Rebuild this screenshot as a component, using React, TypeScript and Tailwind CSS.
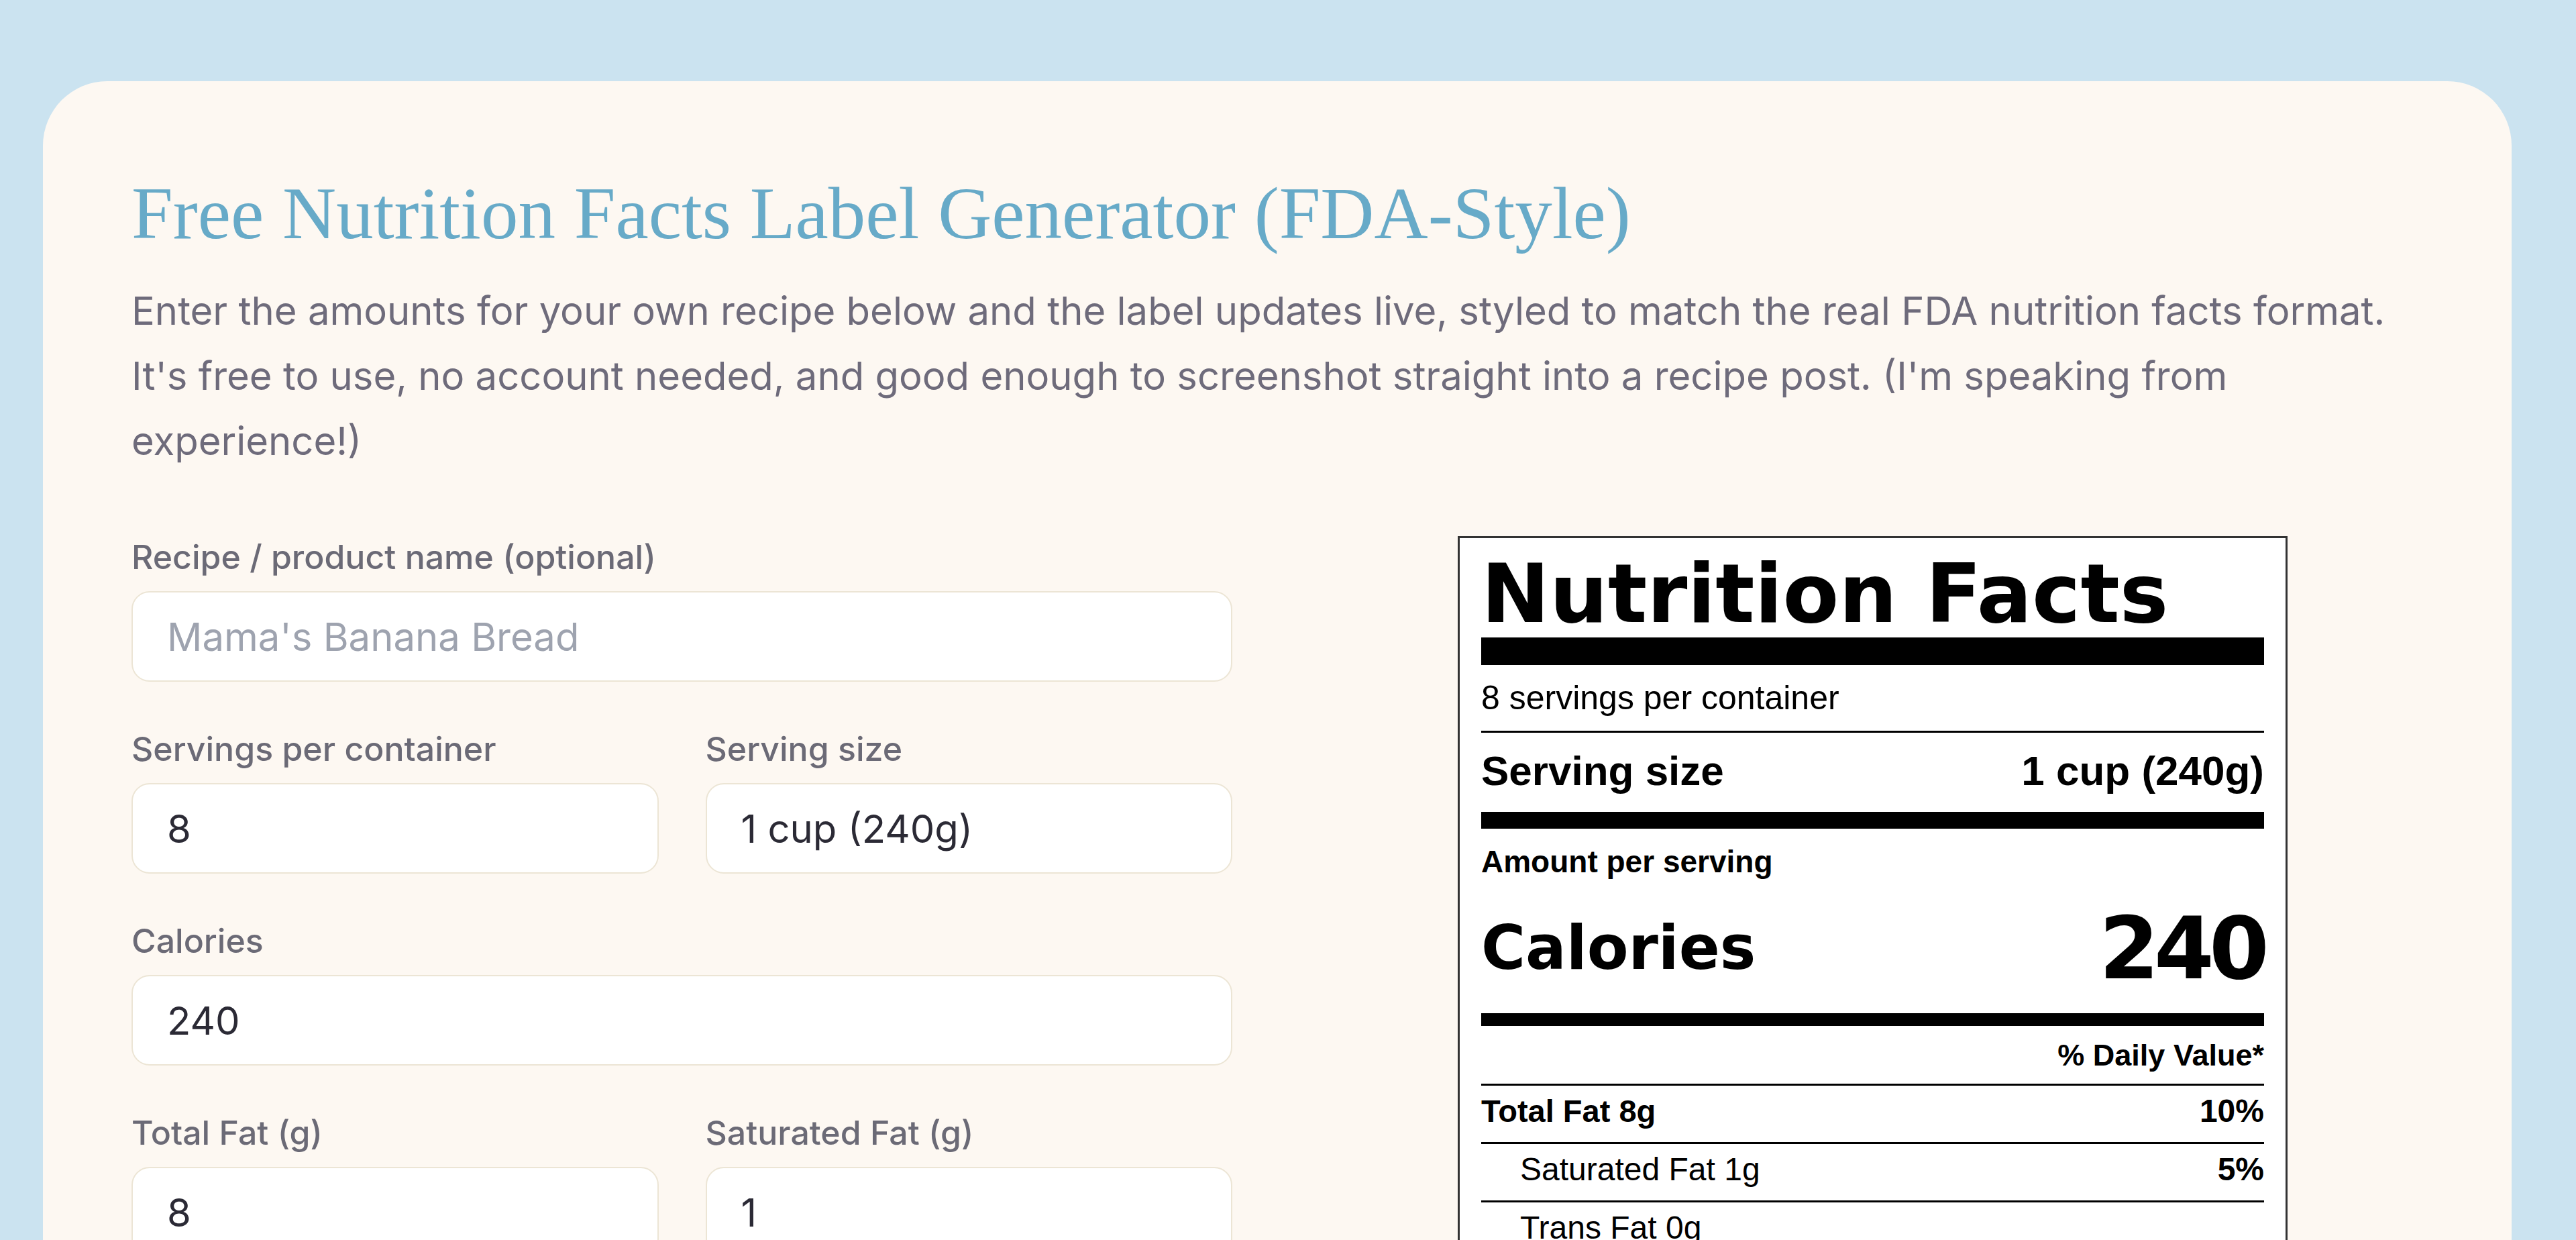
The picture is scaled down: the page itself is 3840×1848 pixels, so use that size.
import React from 'react'

type Field = {
  label: string
  value?: string
  placeholder?: string
  full?: boolean
}

const fields: Field[] = [
  { label: 'Recipe / product name (optional)', placeholder: "Mama's Banana Bread", full: true },
  { label: 'Servings per container', value: '8' },
  { label: 'Serving size', value: '1 cup (240g)' },
  { label: 'Calories', value: '240', full: true },
  { label: 'Total Fat (g)', value: '8' },
  { label: 'Saturated Fat (g)', value: '1' },
  { label: 'Trans Fat (g)', value: '0' },
  { label: 'Cholesterol (mg)', value: '0' },
  { label: 'Sodium (mg)', value: '0' },
  { label: 'Total Carbohydrate (g)', value: '0' },
]

type Nutrient = {
  name: string
  amount: string
  dv?: string
  bold?: boolean
  indent?: boolean
}

const nutrients: Nutrient[] = [
  { name: 'Total Fat', amount: '8g', dv: '10%', bold: true },
  { name: 'Saturated Fat', amount: '1g', dv: '5%', indent: true },
  { name: 'Trans Fat', amount: '0g', indent: true },
  { name: 'Cholesterol', amount: '0mg', dv: '0%', bold: true },
  { name: 'Sodium', amount: '0mg', dv: '0%', bold: true },
  { name: 'Total Carbohydrate', amount: '0g', dv: '0%', bold: true },
]

function FormField({ field }: { field: Field }) {
  return (
    <div className={field.full ? 'col-span-2' : ''}>
      <label className="mb-[19px] block text-[50px] font-medium leading-[63px] text-[#6b6a76]">
        {field.label}
      </label>
      <input
        type="text"
        defaultValue={field.value}
        placeholder={field.placeholder}
        className="h-[135px] w-full rounded-[27px] border-2 border-[#ece5d5] bg-white px-[51px] text-[58px] text-[#2b2a35] outline-none placeholder:text-[#9ea3af]"
      />
    </div>
  )
}

function NutritionLabel() {
  return (
    <div className="mx-auto w-[1237px] border-[3px] border-[#333] bg-white px-[32px] pt-[23px] pb-[30px] font-['Liberation_Sans',Arial,sans-serif] text-black">
      <h2 className="font-['DejaVu_Sans',sans-serif] text-[122px] font-bold leading-[120px]">
        Nutrition Facts
      </h2>
      <div className="mt-[5px] h-[41px] bg-black" />
      <p className="pt-[21px] pb-[20px] text-[50px] leading-[57px]">8 servings per container</p>
      <div className="h-[3px] bg-black" />
      <div className="flex justify-between pt-[20px] pb-[24px] text-[62px] font-bold leading-[1.2]">
        <span>Serving size</span>
        <span>1 cup (240g)</span>
      </div>
      <div className="h-[25px] bg-black" />
      <p className="pt-[22px] text-[46px] font-bold leading-[54px]">Amount per serving</p>
      <div className="mt-[38px] mb-[33px] flex h-[128px] items-center justify-between font-['DejaVu_Sans',sans-serif] font-bold leading-none">
        <span className="text-[90px]">Calories</span>
        <span className="text-[129px] tracking-[-0.06em]">240</span>
      </div>
      <div className="h-[19px] bg-black" />
      <p className="pt-[17px] pb-[16px] text-right text-[45px] font-bold leading-[53px]">% Daily Value*</p>
      {nutrients.map((n) => (
        <div key={n.name}>
          <div className="h-[3px] bg-black" />
          <div className="flex justify-between pt-[10px] pb-[18px] text-[48px] leading-[56px]">
            <span className={`${n.indent ? 'pl-[58px]' : ''} ${n.bold ? 'text-[47px] font-bold' : ''}`}>
              {n.name} {n.amount}
            </span>
            {n.dv && <span className="font-bold">{n.dv}</span>}
          </div>
        </div>
      ))}
    </div>
  )
}

export default function App() {
  return (
    <div className="min-h-screen bg-[#cbe3f0] pt-[121px] pl-[64px] pr-[96px] pb-[120px] font-['Inter',sans-serif]">
      <div className="rounded-[96px] bg-[#fdf8f2] px-[132px] pt-[131px] pb-[132px]">
        {/* Header */}
        <h1 className="font-['Liberation_Serif',serif] text-[111px] font-normal leading-[132px] text-[#67aac8]">
          Free Nutrition Facts Label Generator (FDA-Style)
        </h1>
        <p className="mt-[31px] max-w-[3390px] text-[58px] leading-[97px] text-[#6e6b7b]">
          Enter the amounts for your own recipe below and the label updates live, styled to match the real FDA
          nutrition facts format. It's free to use, no account needed, and good enough to screenshot straight into a
          recipe post. (I'm speaking from experience!)
        </p>

        {/* Form + label */}
        <div className="mt-[93px] grid grid-cols-2 items-start gap-x-[134px]">
          <div className="grid grid-cols-2 gap-x-[70px] gap-y-[69px]">
            {fields.map((f) => (
              <FormField key={f.label} field={f} />
            ))}
          </div>
          <NutritionLabel />
        </div>
      </div>
    </div>
  )
}
